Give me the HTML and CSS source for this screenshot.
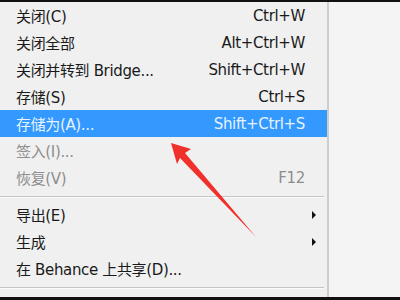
FILE: index.html
```html
<!DOCTYPE html>
<html>
<head>
  <title>文件菜单</title>
  <link rel="stylesheet" href="styles.css">
</head>
<body>
  <div class="screen">
    <div class="menu">
      <div class="item"><span>关闭(C)</span><span class="key">Ctrl+W</span></div>
      <div class="item"><span>关闭全部</span><span class="key">Alt+Ctrl+W</span></div>
      <div class="item"><span>关闭并转到 Bridge...</span><span class="key">Shift+Ctrl+W</span></div>
      <div class="item"><span>存储(S)</span><span class="key">Ctrl+S</span></div>
      <div class="item active"><span>存储为(A)...</span><span class="key">Shift+Ctrl+S</span></div>
      <div class="item disabled"><span>签入(I)...</span><span class="key"></span></div>
      <div class="item disabled"><span>恢复(V)</span><span class="key">F12</span></div>
      <div class="sep"></div>
      <div class="item"><span>导出(E)</span><span class="sub"></span></div>
      <div class="item"><span>生成</span><span class="sub"></span></div>
      <div class="item"><span>在 Behance 上共享(D)...</span><span class="key"></span></div>
      <div class="sep"></div>
    </div>
    <svg class="pointer" width="400" height="300" viewBox="0 0 400 300">
      <path d="M171 143 L191 149 L185 153 L256 237 L180 158 L177 164 Z" fill="#f0302a"/>
    </svg>
  </div>
</body>
</html>
```

FILE: styles.css
```css
body {
  margin: 0;
  background: #f4f4f4;
  font-family: "DejaVu Sans", "Noto Sans CJK SC", sans-serif;
}
.screen {
  position: relative;
  width: 400px;
  height: 300px;
  box-sizing: border-box;
  border-top: 2px solid #111;
  border-bottom: 3px solid #111;
  overflow: hidden;
}
.menu {
  width: 327px;
  height: 100%;
  background: #f0f0f0;
  border-right: 2px solid #cdcdcd;
}
.item {
  display: flex;
  justify-content: space-between;
  align-items: center;
  height: 27px;
  padding: 0 22px 0 16px;
  font-size: 15px;
  letter-spacing: -0.35px;
  color: #1a1a1a;
}
.item.active {
  background: #3399ff;
  color: #e6f2ff;
}
.item.disabled {
  color: #8e8e8e;
}
.sub {
  width: 0;
  height: 0;
  margin-right: -11px;
  border-top: 4px solid transparent;
  border-bottom: 4px solid transparent;
  border-left: 4px solid #111;
}
.sep {
  height: 10px;
  margin-right: 3px;
  background: linear-gradient(#f0f0f0 5px, #c4c4c4 5px, #c4c4c4 6px, #fbfbfb 6px, #fbfbfb 7px, #f0f0f0 7px);
}
.pointer {
  position: absolute;
  top: -2px;
  left: 0;
}
```
